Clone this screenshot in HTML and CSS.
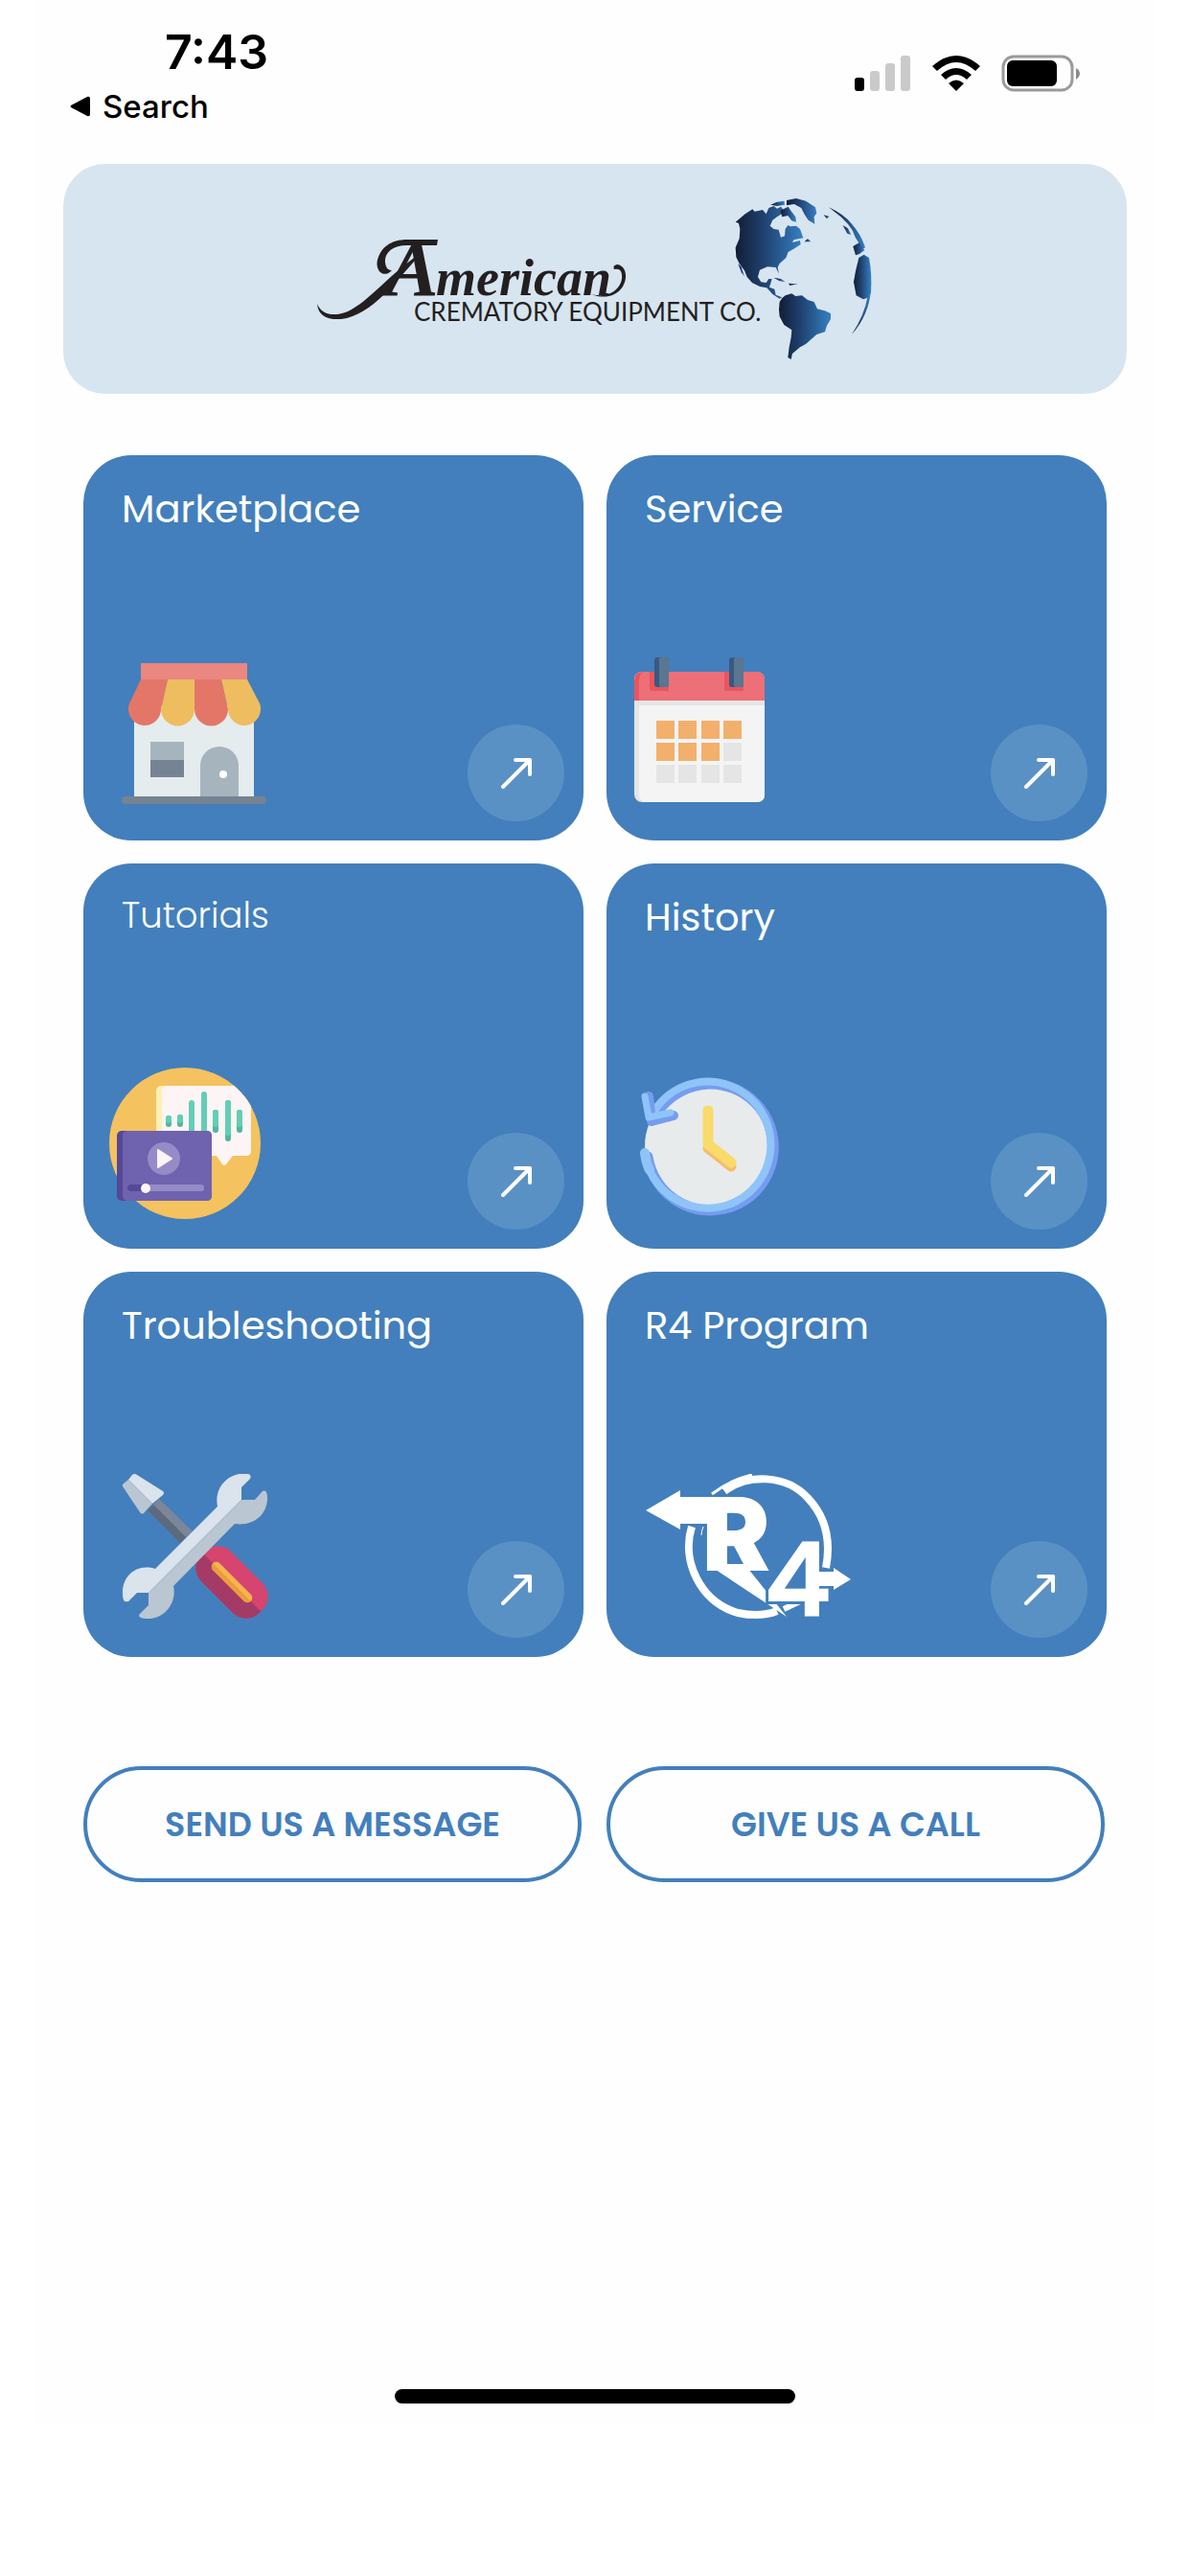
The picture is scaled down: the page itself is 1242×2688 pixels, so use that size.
FILE: index.html
```html
<!DOCTYPE html>
<html lang="en">
<head>
    <meta charset="UTF-8">
    <meta name="viewport" content="width=device-width, initial-scale=1.0">
    <title>American Crematory Equipment Co.</title>
    <link rel="stylesheet" href="styles.css">
</head>
<body>
    <div class="screen">
        <div class="status-bar">
            <div class="status-left">
                <span class="clock">7:43</span>
                <button class="back-btn" type="button">
                    <svg width="22" height="22" viewBox="0 0 22 22" aria-hidden="true"><path d="M1 10 Q0 11 1 12 L18 21 Q21 22 21 19 V3 Q21 0 18 1 Z"/></svg>
                    Search
                </button>
            </div>
            <svg class="status-icons" width="236" height="40" viewBox="0 0 236 40" aria-hidden="true">
                <rect x="0" y="24" width="10" height="14" rx="3"/>
                <g fill="#cacaca">
                    <rect x="16" y="17" width="10" height="21" rx="3"/>
                    <rect x="32" y="9" width="10" height="29" rx="3"/>
                    <rect x="48" y="1" width="10" height="37" rx="3"/>
                </g>
                <path d="M81 12 Q106 -10 131 12 L126 17 Q106 -1 86 17 Z"/>
                <path d="M90 21 Q106 7 122 21 L117 26 Q106 16 95 26 Z"/>
                <path d="M98 30 Q106 23 114 30 L106 38 Z"/>
                <rect x="155" y="2" width="72" height="35" rx="11" fill="none" stroke="#9a9a9a" stroke-width="3"/>
                <rect x="159" y="6" width="52" height="27" rx="6"/>
                <path d="M231 14 Q235 16 235 20 Q235 23 231 26 Z" fill="#8a8a8a"/>
            </svg>
        </div>

        <header class="banner">
            <svg class="logo" width="580" height="174" viewBox="330 205 580 174" role="img" aria-label="American Crematory Equipment Co.">
                <defs>
                    <linearGradient id="globe"><stop offset="0" stop-color="#121d35"/><stop offset=".4" stop-color="#1f3f6d"/><stop offset="1" stop-color="#3580c4"/></linearGradient>
                </defs>
                <g fill="#231f20">
                    <path d="M408 283 C400 292 390 284 393 272 C397 258 408 251 424 251 H456 L455 257 H424 C408 257 400 265 401 275 C402 281 404 283 408 283 Z"/>
                    <path d="M330 318 C335 331 350 331 362 326 C385 315 405 287 441 263 C412 294 388 330 355 334 C340 335 331 330 330 318 Z"/>
                    <path d="M616 308 C640 314 652 296 647 284 Q645 281 640 282 Q638 278 643 277 C652 278 655 290 649 300 C642 311 628 313 616 308 Z"/>
                    <text x="402" y="309" class="logo-cap">A</text>
                    <text x="454" y="309" class="logo-script">merican</text>
                    <text x="431" y="336" class="logo-line">CREMATORY EQUIPMENT CO.</text>
                </g>
                <!-- globe -->
                <g fill="url(#globe)" transform="translate(740 190) scale(.3333)">
                    <path d="M80 128 L110 103 L133 88 L140 95 L165 90 L176 103 L184 84 L200 78 L210 86 L222 80 L232 92 L222 104 L210 112 L196 122 L188 140 L200 150 L215 152 L222 176 L234 172 L236 150 L244 138 L252 142 L270 140 L282 150 L292 178 L280 180 L262 184 L258 192 L282 186 L284 198 L262 212 L245 222 L238 240 L218 258 L212 270 L216 290 L206 270 L180 268 L156 278 L150 300 L160 316 L176 318 L184 306 L194 306 L190 320 L186 332 L202 338 L206 356 L226 364 L218 368 L196 354 L178 334 L156 330 L132 318 L116 300 L108 280 L92 258 L82 238 L80 208 L92 180 L94 150 L90 132 Z"/>
                    <path d="M88 258 L98 268 L108 298 L98 286 Z"/>
                    <path d="M240 60 L270 54 L300 62 L330 82 L334 100 L326 112 L328 134 L308 122 L296 104 L286 84 L264 72 L240 76 Z"/>
                    <path d="M220 92 L245 80 L254 94 L268 112 L270 128 L256 124 L244 108 L226 112 Z"/>
                    <path d="M190 74 L208 66 L232 62 L234 74 L210 78 Z"/>
                    <path d="M296 190 L306 180 L316 190 Z"/>
                    <path d="M200 302 L222 306 L236 316 L216 312 Z"/>
                    <path d="M246 320 L276 322 L250 327 Z"/>
                    <path d="M356 106 L374 110 L366 118 Z"/>
                    <path d="M218 378 L226 366 L236 358 L256 352 L268 360 L288 358 L306 372 L326 378 L336 400 L360 406 L378 414 L378 432 L366 452 L360 472 L334 480 L318 494 L300 510 L282 520 L268 532 L258 540 L254 558 L244 552 L248 520 L254 490 L256 466 L232 450 L218 424 L216 402 Z"/>
                    <path d="M372 82 Q420 104 444 134 Q474 168 486 208 L478 212 L468 196 L456 178 L446 154 L432 134 L410 112 Z"/>
                    <path d="M416 138 L432 148 L442 168 L430 164 Z"/>
                    <path d="M448 204 L468 192 L484 216 L468 228 L456 232 Z"/>
                    <path d="M466 240 L482 230 L498 240 Q508 290 504 350 L492 366 L480 370 L458 358 L450 316 L456 282 Z"/>
                    <path d="M504 340 Q498 420 444 480 Q484 420 494 360 Z"/>
                </g>
            </svg>
        </header>

        <main class="content">
            <nav class="cards">
                <a class="card" href="#marketplace">
                    <span class="card-title">Marketplace</span>
                    <span class="card-foot">
                        <svg class="card-icon" viewBox="0 0 240 160" aria-hidden="true">
                            <path fill="#e4ecee" d="M26 50 H151 V146 H26 Z"/>
                            <path fill="#e98780" d="M33 6 H144 V23 H33 Z"/>
                            <path fill="#e47668" d="M33 23 H61 L54 54 A17 17 0 0 1 20 54 Q20 50 21 48 Z"/>
                            <path fill="#edbd60" d="M61 23 H89 V54 A17 17 0 0 1 54 54 Z"/>
                            <path fill="#e47668" d="M89 23 H117 L124 54 A17 17 0 0 1 89 54 Z"/>
                            <path fill="#edbd60" d="M117 23 H144 L157 48 Q158 50 158 54 A17 17 0 0 1 124 54 Z"/>
                            <path fill="#a6b4be" d="M43 88 H78 V107 H43 Z"/>
                            <path fill="#768393" d="M43 107 H78 V125 H43 Z"/>
                            <path fill="#a6b4be" d="M95 146 V113 A20 20 0 0 1 135 113 V146 Z"/>
                            <circle cx="119" cy="122" r="4" fill="#fff"/>
                            <rect x="13" y="145" width="151" height="8" rx="4" fill="#768393"/>
                        </svg>
                        <span class="go"><svg viewBox="0 0 32 32" aria-hidden="true"><path d="M2 30 L30 2 M15 2 H30 V17"/></svg></span>
                    </span>
                </a>
                <a class="card" href="#service">
                    <span class="card-title">Service</span>
                    <span class="card-foot">
                        <svg class="card-icon" viewBox="0 0 240 160" aria-hidden="true">
                            <rect x="2" y="15" width="136" height="136" rx="8" fill="#e5e5e5"/>
                            <path fill="#f4f4f4" d="M7 50 H138 V143 Q138 151 130 151 H13 Q7 150 7 142 Z"/>
                            <path fill="#e9555f" d="M2 45 V24 Q2 15 11 15 H129 Q138 15 138 24 V45 Z"/>
                            <path fill="#ed6f77" d="M7 45 V24 Q7 16 13 15 H129 Q138 15 138 24 V45 Z"/>
                            <path fill="#e9555f" d="M18 15 H38 V35 H21 Q18 35 18 32 Z M96 15 H116 V35 H99 Q96 35 96 32 Z"/>
                            <rect x="23" y="0" width="15" height="31" rx="3" fill="#385a80"/>
                            <rect x="28" y="0" width="10" height="31" rx="2" fill="#5a7690"/>
                            <rect x="101" y="0" width="15" height="31" rx="3" fill="#385a80"/>
                            <rect x="106" y="0" width="10" height="31" rx="2" fill="#5a7690"/>
                            <path fill="#f2b06c" d="M25 66h19v19h-19z M48 66h19v19h-19z M72 66h19v19h-19z M95 66h19v19h-19z M25 89h19v19h-19z M48 89h19v19h-19z M72 89h19v19h-19z"/>
                            <path fill="#e5e5e5" d="M95 89h19v19h-19z M25 112h19v19h-19z M48 112h19v19h-19z M72 112h19v19h-19z M95 112h19v19h-19z"/>
                        </svg>
                        <span class="go"><svg viewBox="0 0 32 32" aria-hidden="true"><path d="M2 30 L30 2 M15 2 H30 V17"/></svg></span>
                    </span>
                </a>
                <a class="card" href="#tutorials">
                    <span class="card-title light">Tutorials</span>
                    <span class="card-foot">
                        <svg class="card-icon" viewBox="0 0 240 160" aria-hidden="true">
                            <clipPath id="disc"><path d="M0 81 A79 79 0 0 1 158 81 V160 H0 Z"/></clipPath>
                            <circle cx="79" cy="81" r="79" fill="#f4c25f"/>
                            <g clip-path="url(#disc)">
                                <rect x="49" y="21" width="99" height="73" rx="5" fill="#fdf0b5"/>
                                <path fill="#fdf4f5" d="M60 21 H148 V89 Q148 94 143 94 H129 L122 103 Q120 105 118 103 L112 94 H55 V26 Q56 22 60 21 Z"/>
                            </g>
                            <g stroke-width="6" stroke-linecap="round">
                                <path stroke="#50b69d" d="M62 55 V61 M74 54 V61 M111 49 V67 M124 39 V76 M136 49 V67"/>
                                <path stroke="#62cfb5" d="M62 55 V57 M74 54 V57 M86 39 V80 M99 30 V80 M111 49 V61 M124 39 V70 M136 49 V61"/>
                            </g>
                            <rect x="8" y="68" width="99" height="73" rx="5" fill="#554896"/>
                            <rect x="14" y="68" width="93" height="73" rx="5" fill="#6f62af"/>
                            <circle cx="57" cy="97" r="17" fill="#958cc7"/>
                            <path fill="#fdf4f5" stroke="#fdf4f5" stroke-width="2" stroke-linejoin="round" d="M51 88 L65 97 L51 106 Z"/>
                            <rect x="19" y="124" width="80" height="7" rx="3" fill="#958cc7"/>
                            <rect x="19" y="124" width="22" height="7" rx="3" fill="#554896"/>
                            <circle cx="38" cy="128" r="5" fill="#fff5f5"/>
                        </svg>
                        <span class="go"><svg viewBox="0 0 32 32" aria-hidden="true"><path d="M2 30 L30 2 M15 2 H30 V17"/></svg></span>
                    </span>
                </a>
                <a class="card" href="#history">
                    <span class="card-title">History</span>
                    <span class="card-foot">
                        <svg class="card-icon" viewBox="0 0 240 160" aria-hidden="true">
                            <circle cx="77" cy="84" r="64" fill="#e7ebec"/>
                            <g fill="none" stroke-linecap="round" stroke-linejoin="round">
                                <path stroke="#759cf0" stroke-width="11" d="M23 54 A66 66 0 1 1 16 95"/>
                                <path stroke="#8fc4f9" stroke-width="8" d="M19 54 A66 66 0 1 1 13 91"/>
                                <path stroke="#8fc4f9" stroke-width="10" d="M13 91 Q14 101 18 109"/>
                                <path stroke="#759cf0" stroke-width="10" d="M17 32 L20 58 L43 52"/>
                                <path stroke="#8fc4f9" stroke-width="7" d="M13 32 L17 54 L40 49"/>
                                <path stroke="#f5bd6e" stroke-width="11" d="M79 86 L103 105"/>
                                <path stroke="#f9da6a" stroke-width="11" d="M79 47 V82 L103 101"/>
                            </g>
                        </svg>
                        <span class="go"><svg viewBox="0 0 32 32" aria-hidden="true"><path d="M2 30 L30 2 M15 2 H30 V17"/></svg></span>
                    </span>
                </a>
                <a class="card" href="#troubleshooting">
                    <span class="card-title">Troubleshooting</span>
                    <span class="card-foot">
                        <svg class="card-icon" viewBox="0 0 240 160" aria-hidden="true">
                            <path fill="#7c8699" d="M52 26 L87 60 L80 66 L46 32 Z"/>
                            <path fill="#5f697d" d="M46 32 L80 66 L74 72 L40 38 Z"/>
                            <path fill="#dbe3ed" d="M24 1 Q26 -1 29 1 L56 18 Q58 20 56 22 L45 31 L20 6 Z"/>
                            <path fill="#bac6d2" d="M20 6 L45 31 L36 41 Q34 43 32 40 L14 13 Q13 11 15 10 Z"/>
                            <g transform="translate(128 113) rotate(45)">
                                <rect x="-43" y="-22" width="86" height="44" rx="20" fill="#d6456f"/>
                                <path fill="#a43b67" d="M-43 0 H43 V2 A20 20 0 0 1 23 22 H-23 A20 20 0 0 1 -43 2 Z"/>
                                <rect x="-28" y="-5" width="56" height="10" rx="5" fill="#f5b553"/>
                                <path fill="#ee9c38" d="M-28 0 H28 Q27 5 23 5 H-23 Q-27 5 -28 0 Z"/>
                            </g>
                            <path fill="#dbe3ed" d="M138 27 V14 L147 5 Q149 1 145 0 C125 -3 109 14 113 34 L48 99 C28 93 13 107 14 126 Q14 135 20 133 L29 124 H41 Z"/>
                            <path fill="#bac6d2" d="M138 27 H152 L160 18 Q164 16 165 23 C166 43 150 55 131 52 L67 117 C71 134 58 152 39 151 Q27 150 33 145 L41 137 V124 Z"/>
                        </svg>
                        <span class="go"><svg viewBox="0 0 32 32" aria-hidden="true"><path d="M2 30 L30 2 M15 2 H30 V17"/></svg></span>
                    </span>
                </a>
                <a class="card" href="#r4-program">
                    <span class="card-title">R4 Program</span>
                    <span class="card-foot">
                        <svg class="card-icon" viewBox="0 0 240 160" aria-hidden="true" fill="#fff">
                            <g fill="none" stroke="#fff">
                                <path stroke-width="8" d="M96 18 C120 0 160 0 183 25 C203 46 207 72 202 98"/>
                                <path stroke-width="8" d="M62 55 C51 90 70 133 110 145 Q134 150 151 143"/>
                                <path stroke-width="6" d="M158 141 L177 132"/>
                                <path stroke-width="2" d="M153 135 Q168 131 177 124"/>
                                <path stroke-width="3" d="M83 21 Q102 6 125 1"/>
                                <path stroke-width="1" d="M74 55 Q72 60 72 64"/>
                            </g>
                            <path d="M14 38 L50 17 V24 H84 V52 H50 V58 Z"/>
                            <path d="M78 94 H117 L161 149 Z"/>
                            <text x="73" y="101" class="mark-r">R</text>
                            <text x="137" y="148" class="mark-4">4</text>
                            <path d="M192 102 H210 V98 L228 110 L210 121 V117 H192 Z"/>
                        </svg>
                        <span class="go"><svg viewBox="0 0 32 32" aria-hidden="true"><path d="M2 30 L30 2 M15 2 H30 V17"/></svg></span>
                    </span>
                </a>
            </nav>

            <div class="actions">
                <button class="action-btn" type="button">SEND US A MESSAGE</button>
                <button class="action-btn" type="button">GIVE US A CALL</button>
            </div>
        </main>

        <div class="home-bar"></div>
    </div>
</body>
</html>
```
FILE: styles.css
```css
* { box-sizing: border-box; margin: 0; padding: 0; }
body { background: #fff; color: #000; font-family: 'Poppins', 'Inter', sans-serif; padding: 0 36px 158px; }

.screen { display: flex; flex-direction: column; min-height: calc(100vh - 158px); background: #fefefe; padding-bottom: 22px; }

.status-bar { display: flex; justify-content: space-between; align-items: center; height: 154px; padding: 0 78px 0 37px; font-family: 'Inter', sans-serif; }
.status-left { display: flex; flex-direction: column; align-items: flex-start; padding-top: 8px; }
.clock { padding-left: 99px; font-size: 50px; font-weight: 600; line-height: 60px; }
.back-btn { display: flex; align-items: center; gap: 12px; border: none; background: none; color: #000; font-family: inherit; font-size: 33px; font-weight: 500; line-height: 54px; cursor: pointer; }

.banner { display: flex; justify-content: center; align-items: center; height: 240px; margin: 17px 30px 64px; border-radius: 44px; background: #d7e5f0; }
.logo-cap { font-family: 'Liberation Serif', serif; font-size: 82px; font-weight: bold; font-style: italic; }
.logo-script { font-family: 'Liberation Serif', serif; font-size: 54px; font-weight: bold; font-style: italic; }
.logo-line { font-family: 'Lato', sans-serif; font-size: 26px; }

.content { padding: 0 51px; }
.cards { display: grid; grid-template-columns: 1fr 1fr; gap: 24px; }
.card { display: flex; flex-direction: column; justify-content: space-between; height: 402px; padding: 26px 20px 20px 27px; border-radius: 50px; background: #437fbc; color: #fff; text-decoration: none; }
.card-title { padding-left: 13px; font-size: 40px; line-height: 60px; }
.card-title.light { font-size: 37px; font-weight: 300; line-height: 56px; }
.card-foot { display: flex; justify-content: space-between; align-items: flex-end; }
.card-icon { width: 240px; height: 160px; margin-bottom: 11px; }
.go { display: flex; justify-content: center; align-items: center; width: 101px; height: 101px; border-radius: 50%; background: #5a91c5; }
.go svg { width: 32px; height: 32px; fill: none; stroke: #fff; stroke-width: 4; stroke-linecap: round; stroke-linejoin: round; }
.mark-r { font-family: 'Inter', sans-serif; font-size: 106px; font-weight: 900; }
.mark-4 { font-family: 'Poppins', sans-serif; font-size: 108px; font-weight: 600; stroke: #437fbc; stroke-width: 6px; paint-order: stroke; }

.actions { display: grid; grid-template-columns: 1fr 1fr; gap: 26px; margin-top: 114px; padding-right: 2px; }
.action-btn { height: 121px; border: 4px solid #437fbc; border-radius: 61px; background: #fefefe; color: #437fbc; font-family: inherit; font-size: 35px; font-weight: 600; cursor: pointer; }

.home-bar { width: 418px; height: 15px; margin: auto auto 0; border-radius: 8px; background: #000; }
```
